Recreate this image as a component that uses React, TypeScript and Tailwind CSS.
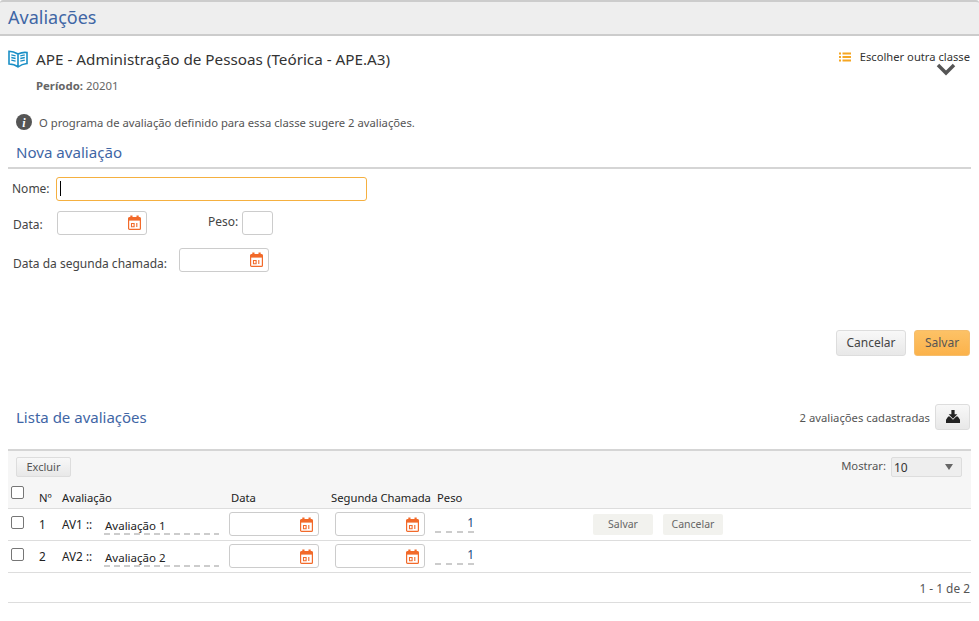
import React from "react";

const font = { fontFamily: '"Noto Sans", sans-serif' };

function Cal() {
  return (
    <svg width="13" height="15" viewBox="0 0 13 15" className="shrink-0" fill="none">
      <rect x="0.6" y="2.6" width="11.8" height="11.8" rx="1" stroke="#f26a2a" strokeWidth="1.2" />
      <rect x="0.6" y="2.6" width="11.8" height="3" fill="#f26a2a" />
      <rect x="2.3" y="0.5" width="2.2" height="3" fill="#f26a2a" />
      <rect x="8.5" y="0.5" width="2.2" height="3" fill="#f26a2a" />
      <path d="M3.500 8.500h2.600v3.200H3.500zM8.800 8v4" stroke="#f26a2a" strokeWidth="1.1" />
    </svg>
  );
}

function DateBox() {
  return (
    <div className="w-[90px] h-[24px] rounded-[3px] border border-[#ccc] bg-white flex items-center justify-end pr-[5px]">
      <Cal />
    </div>
  );
}

function Check() {
  return <div className="w-[13px] h-[13px] rounded-[2px] border border-[#767676] bg-white" />;
}

function Row({ n, name, actions }: { n: string; name: string; actions?: boolean }) {
  return (
    <div className="h-[32px] flex items-center border-b border-[#ddd] text-[11.75px] text-[#222]">
      <div className="w-[31px] pl-[3px] flex mb-[3px]"><Check /></div>
      <div className="w-[23px] mt-[1px]">{n}</div>
      <div className="w-[42px] mt-[1px]">AV{n} ::</div>
      <div className="w-[115px] h-[22px] mb-[1px] mr-[10px] pl-[1px] leading-[26px] text-[11.5px] text-[#222] [background-image:linear-gradient(to_right,#ccc_60%,transparent_60%)] [background-size:10px_2px] [background-position:0_bottom] [background-repeat:repeat-x]">
        {name}
      </div>
      <DateBox />
      <div className="ml-[16px]"><DateBox /></div>
      <div className="ml-[10px] mb-[4px] w-[39px] h-[21px] text-right text-[#1a4a80] leading-[21px] text-[12px] [background-image:linear-gradient(to_right,#ccc_55%,transparent_55%)] [background-size:11px_2px] [background-position:0_bottom] [background-repeat:repeat-x]">
        1
      </div>
      {actions && (
        <div className="ml-[119px] flex gap-[10px]">
          <div className="w-[60px] h-[21px] rounded-[2px] bg-[#f2f2ee] text-[#666] text-[10.5px] flex items-center justify-center">Salvar</div>
          <div className="w-[60px] h-[21px] rounded-[2px] bg-[#f2f2ee] text-[#666] text-[10.5px] flex items-center justify-center">Cancelar</div>
        </div>
      )}
    </div>
  );
}

export default function App() {
  return (
    <div className="w-[979px] h-[621px] overflow-hidden bg-white text-[12px] text-[#444]" style={font}>
      <div className="h-[36px] bg-[#eee] border-t-2 border-b-2 border-[#ccc] rounded-t-[3px] pl-[8px] text-[18px] leading-[31px] text-[#3f66a5]">
        Avaliações
      </div>

      <div className="relative pl-[8px] pt-[12px] h-[57px]">
        <div className="flex items-center gap-[8px]">
          <svg width="20" height="19" viewBox="0 0 20 19" fill="none" stroke="#1a8fc6" strokeWidth="1.6">
            <path d="M10 4C7.500 2.500 4 1.300 1 1.300V14c3.200 0 6.500 1 9 3 2.500-2 5.500-3.200 9-3.500V2.500C15.500 2 12.500 2.800 10 4zM10 4v13" />
            <path d="M3.300 4.800l4.300 1M3.300 7.500l4.300 1M3.300 10.200l4.300 1M12.300 5.800l4.500-1M12.300 8.500l4.500-1M12.300 11.200l4.500-1" strokeWidth="1.3" />
          </svg>
          <span className="text-[15.25px] text-[#333]">APE - Administração de Pessoas (Teórica - APE.A3)</span>
        </div>
        <div className="pl-[28px] mt-[6px] text-[11.4px] text-[#666]"><b>Período:</b> 20201</div>
        <div className="absolute right-[9px] top-[13px] flex items-center gap-[9px] text-[11.2px] text-[#333]">
          <svg width="12" height="10" viewBox="0 0 12 10" fill="#f5a623">
            <rect x="0" y="0.5" width="2" height="2" /><rect x="3.500" y="0.5" width="8.500" height="2" />
            <rect x="0" y="4" width="2" height="2" /><rect x="3.500" y="4" width="8.500" height="2" />
            <rect x="0" y="7.500" width="2" height="2" /><rect x="3.500" y="7.500" width="8.500" height="2" />
          </svg>
          Escolher outra classe
        </div>
        <svg className="absolute left-[936px] top-[27px]" width="20" height="13" viewBox="0 0 20 13" fill="none" stroke="#555" strokeWidth="3.500">
          <path d="M2 2l8 8 8-8" />
        </svg>
      </div>

      <div className="flex items-center gap-[7px] pl-[16px] mt-[20px] text-[11.25px] text-[#555]">
        <svg width="16" height="16" viewBox="0 0 16 16" className="mb-[1px]">
          <circle cx="8" cy="8" r="8" fill="#555" />
          <text x="8" y="12.500" textAnchor="middle" fontSize="12" fontWeight="700" fontStyle="italic" fontFamily="Liberation Serif" fill="#fff">i</text>
        </svg>
        <span className="mt-[2px]">O programa de avaliação definido para essa classe sugere 2 avaliações.</span>
      </div>

      <div className="mx-[8px] mt-[7px] h-[30px] pl-[8px] border-b-2 border-[#d5d5d5] text-[15.1px] leading-[26px] text-[#3f66a5]">Nova avaliação</div>

      <div className="pl-[12px] mt-[8px] text-[12px] text-[#444]">
        <div className="flex items-center gap-[6px] h-[24px]">
          Nome:
          <div className="w-[311px] h-[24px] rounded-[3px] border border-[#f5b040] flex items-center pl-[3px]">
            <div className="w-[1.5px] h-[15px] bg-black" />
          </div>
        </div>
        <div className="flex items-center h-[24px] mt-[10px] pl-[1px]">
          <span className="w-[44px] mt-[5px]">Data:</span>
          <DateBox />
          <span className="ml-[61px] mb-[2px]">Peso:</span>
          <div className="ml-[4px] w-[31px] h-[24px] rounded-[3px] border border-[#ccc]" />
        </div>
        <div className="flex items-center h-[24px] mt-[13px] pl-[1px]">
          <span className="w-[166px] mt-[8px]">Data da segunda chamada:</span>
          <DateBox />
        </div>
      </div>

      <div className="flex justify-end gap-[8px] pr-[9px] mt-[58px]">
        <div className="w-[70px] h-[26px] rounded-[3px] border border-[#ddd] bg-gradient-to-b from-[#f8f8f8] to-[#e8e8e8] flex items-center justify-center text-[12px] text-[#444]">Cancelar</div>
        <div className="w-[56px] h-[26px] rounded-[3px] bg-gradient-to-b from-[#fdc266] to-[#fbb24a] border border-[#f5bd6c] flex items-center justify-center text-[12px] text-[#555]">Salvar</div>
      </div>

      <div className="flex items-center justify-between pl-[16px] pr-[9px] mt-[48px] h-[26px]">
        <span className="text-[15px] text-[#3f66a5] mt-[1px]">Lista de avaliações</span>
        <div className="flex items-center gap-[5px] text-[11.25px] text-[#555]">
          <span className="mt-[3px]">2 avaliações cadastradas</span>
          <div className="w-[35px] h-[26px] rounded-[3px] border border-[#ddd] bg-gradient-to-b from-[#f8f8f8] to-[#e8e8e8] flex items-center justify-center">
            <svg width="14" height="13" viewBox="0 0 13 12" fill="#222">
              <path d="M5 0h3v4h2.500L6.500 8 2.500 4H5z" />
              <path d="M0 12V9l2-3h1.500L6.500 9l3-3H11l2 3v3z" />
            </svg>
          </div>
        </div>
      </div>

      <div className="mx-[8px] mt-[19px] border-t-2 border-[#d5d5d5]">
        <div className="bg-[#f6f6f6] h-[58px] border-b border-[#ddd] relative">
          <div className="flex items-center justify-between pl-[8px] pr-[9px] pt-[6px]">
            <div className="w-[55px] h-[20px] rounded-[2px] border border-[#ddd] bg-gradient-to-b from-[#f8f8f8] to-[#e8e8e8] flex items-center justify-center text-[11px] text-[#555]">Excluir</div>
            <div className="flex items-center gap-[5px] text-[11.25px] text-[#555]">
              Mostrar:
              <div className="w-[71px] h-[20px] rounded-[2px] border border-[#ddd] bg-[#eee] flex items-center justify-between pl-[2px] pr-[8px] text-[12px] text-[#333]">
                <span className="mt-[3px]">10</span>
                <span className="w-0 h-0 border-l-[4.500px] border-r-[4.500px] border-t-[6px] border-l-transparent border-r-transparent border-t-[#666]" />
              </div>
            </div>
          </div>
          <div className="flex items-end text-[11.25px] text-[#222] h-[27px] pl-[3px] mt-[3px]">
            <div className="w-[28px] self-start mt-[6px]"><Check /></div>
            <div className="w-[23px]">Nº</div>
            <div className="w-[169px]">Avaliação</div>
            <div className="w-[100px]">Data</div>
            <div className="w-[106px]">Segunda Chamada</div>
            <div>Peso</div>
          </div>
        </div>
        <Row n="1" name="Avaliação 1" actions />
        <Row n="2" name="Avaliação 2" />
        <div className="h-[30px] border-b border-[#ddd] flex items-center justify-end text-[11.9px] text-[#555] pr-[1px]"><span className="mt-[4px]">1 - 1 de 2</span></div>
      </div>
    </div>
  );
}
